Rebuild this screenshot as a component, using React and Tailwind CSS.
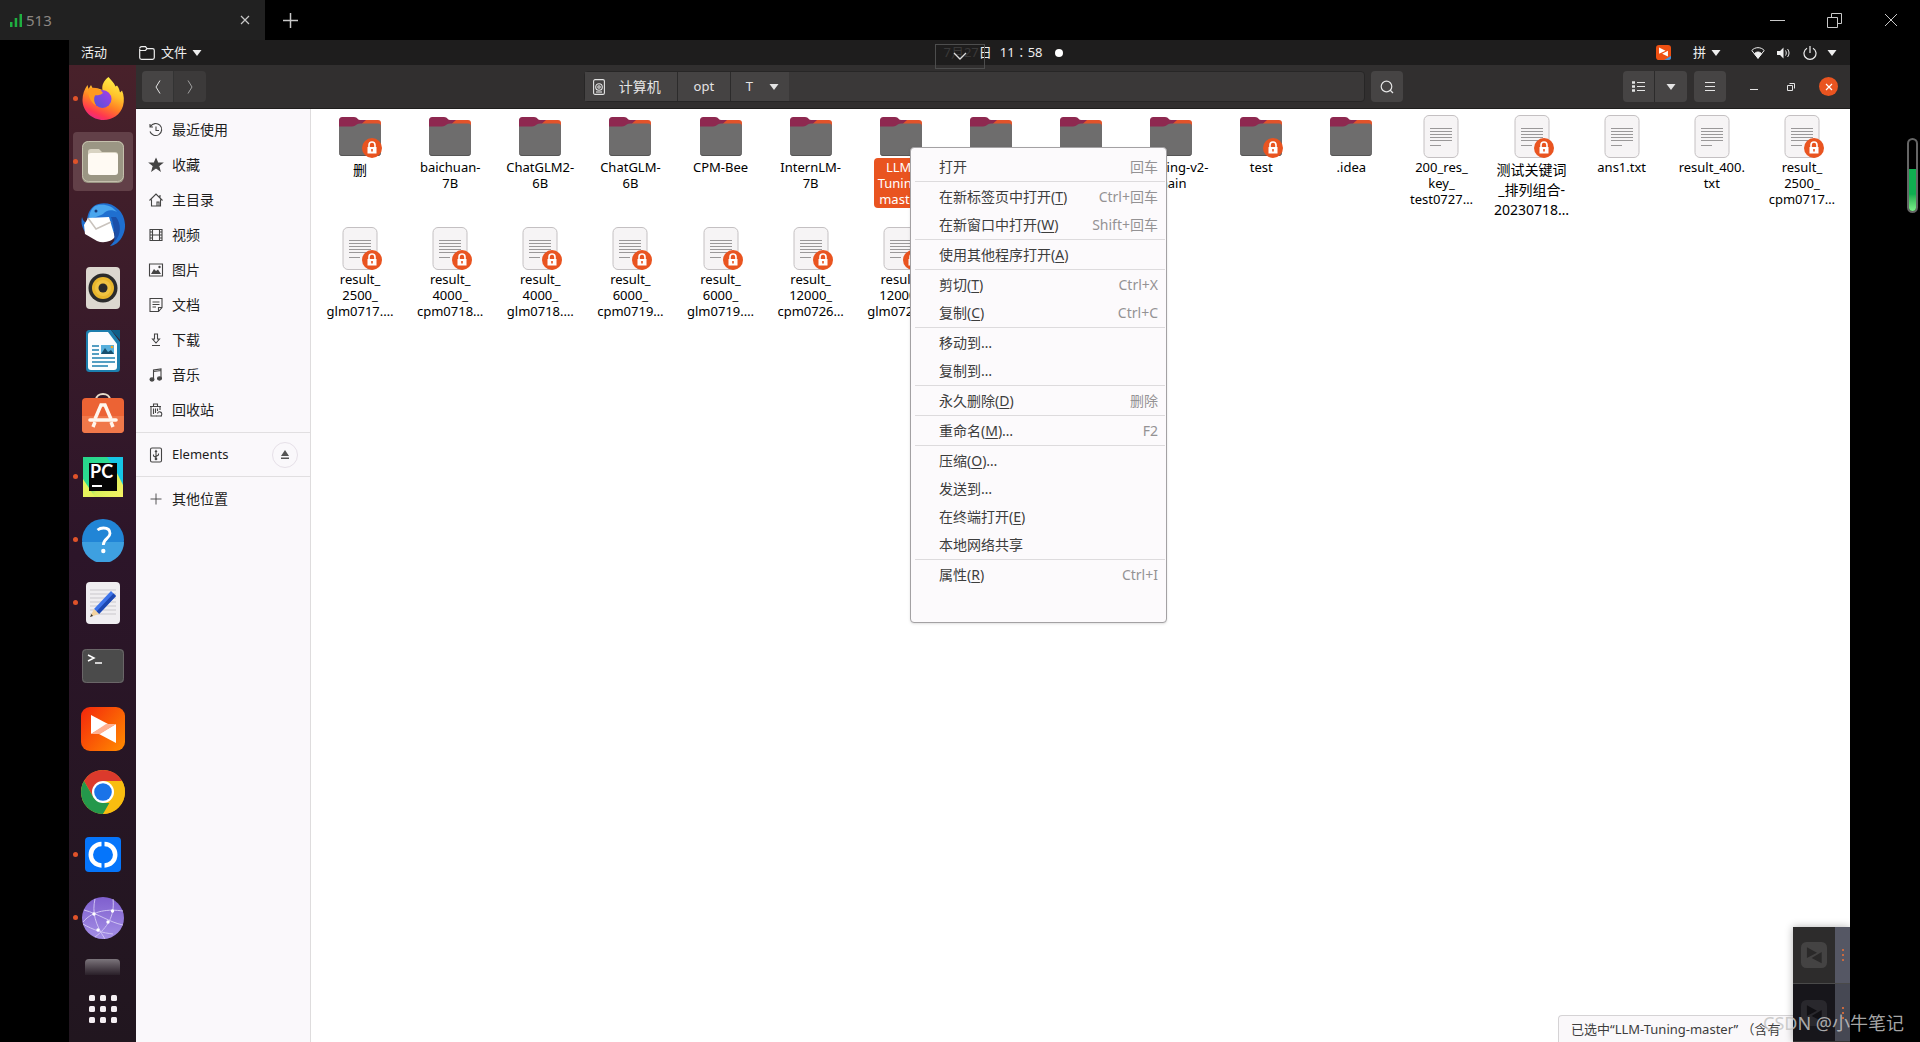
import React from 'react';
import clsx from 'clsx';

const places = [
    { label: '最近使用', icon: 'recent' },
    { label: '收藏', icon: 'star' },
    { label: '主目录', icon: 'home' },
    { label: '视频', icon: 'video' },
    { label: '图片', icon: 'image' },
    { label: '文档', icon: 'doc' },
    { label: '下载', icon: 'download' },
    { label: '音乐', icon: 'music' },
    { label: '回收站', icon: 'trash' },
];

const files = [
    { type: 'folder', locked: true, name: '删', cjk: true },
    { type: 'folder', name: 'baichuan-\n7B' },
    { type: 'folder', name: 'ChatGLM2-\n6B' },
    { type: 'folder', name: 'ChatGLM-\n6B' },
    { type: 'folder', name: 'CPM-Bee' },
    { type: 'folder', name: 'InternLM-\n7B' },
    { type: 'folder', name: 'LLM-\nTuning-\nmaster', selected: true },
    { type: 'folder', name: '' },
    { type: 'folder', name: '' },
    { type: 'folder', name: 'P-tuning-v2-\nmain' },
    { type: 'folder', locked: true, name: 'test' },
    { type: 'folder', name: '.idea' },
    { type: 'text', name: '200_res_\nkey_\ntest0727…' },
    { type: 'text', locked: true, name: '测试关键词\n_排列组合-\n20230718…', cjk: true },
    { type: 'text', name: 'ans1.txt' },
    { type: 'text', name: 'result_400.\ntxt' },
    { type: 'text', locked: true, name: 'result_\n2500_\ncpm0717…' },
    { type: 'text', locked: true, name: 'result_\n2500_\nglm0717.…' },
    { type: 'text', locked: true, name: 'result_\n4000_\ncpm0718…' },
    { type: 'text', locked: true, name: 'result_\n4000_\nglm0718.…' },
    { type: 'text', locked: true, name: 'result_\n6000_\ncpm0719…' },
    { type: 'text', locked: true, name: 'result_\n6000_\nglm0719.…' },
    { type: 'text', locked: true, name: 'result_\n12000_\ncpm0726…' },
    { type: 'text', locked: true, name: 'result_\n12000_\nglm0726.…' },
];

const menuGroups = [
    [{ label: '打开', accel: '回车' }],
    [
        { label: '在新标签页中打开', hotkey: 'T', accel: 'Ctrl+回车' },
        { label: '在新窗口中打开', hotkey: 'W', accel: 'Shift+回车' },
    ],
    [{ label: '使用其他程序打开', hotkey: 'A' }],
    [
        { label: '剪切', hotkey: 'T', accel: 'Ctrl+X' },
        { label: '复制', hotkey: 'C', accel: 'Ctrl+C' },
    ],
    [{ label: '移动到…' }, { label: '复制到…' }],
    [{ label: '永久删除', hotkey: 'D', accel: '删除' }],
    [{ label: '重命名', hotkey: 'M', more: true, accel: 'F2' }],
    [
        { label: '压缩', hotkey: 'O', more: true },
        { label: '发送到…' },
        { label: '在终端打开', hotkey: 'E' },
        { label: '本地网络共享' },
    ],
    [{ label: '属性', hotkey: 'R', accel: 'Ctrl+I' }],
];

const dockApps = [
    { name: 'Firefox', icon: 'firefox', running: true },
    { name: '文件', icon: 'files', running: true, active: true },
    { name: 'Thunderbird', icon: 'thunderbird' },
    { name: 'Rhythmbox', icon: 'rhythmbox' },
    { name: 'LibreOffice Writer', icon: 'writer' },
    { name: 'Ubuntu Software', icon: 'software' },
    { name: 'PyCharm', icon: 'pycharm', running: true },
    { name: '帮助', icon: 'help', running: true },
    { name: '文本编辑器', icon: 'editor', running: true },
    { name: '终端', icon: 'terminal' },
    { name: '向日葵', icon: 'remote' },
    { name: 'Chrome', icon: 'chrome' },
    { name: 'ToDesk', icon: 'todesk', running: true },
    { name: 'Web', icon: 'web', running: true },
];

const dockIcons = {
    firefox: (
        <>
            <defs>
                <linearGradient id="ffBody" x1="0.75" y1="0" x2="0.3" y2="1">
                    <stop offset="0" stopColor="#fff24a" />
                    <stop offset="0.35" stopColor="#ffc32c" />
                    <stop offset="0.6" stopColor="#ff8224" />
                    <stop offset="0.85" stopColor="#ff3750" />
                    <stop offset="1" stopColor="#e8268a" />
                </linearGradient>
                <linearGradient id="ffCore" x1="1" y1="0" x2="0" y2="1">
                    <stop offset="0" stopColor="#a93be8" />
                    <stop offset="1" stopColor="#4f55d8" />
                </linearGradient>
            </defs>
            <path d="M27.500 0C30 3 33 5.500 34.500 9.500L36 8.500C38 11 38.500 13 39 15.500L41 13.500C43 18 43.500 24 42 29C39.500 37.500 31.500 43 22.500 43C11 43 1.500 34 1.500 23C1.500 17 3.500 12 6.500 8L7.500 12L10 8L12 12C15 11 19 11.500 21.500 13C20.500 8 23 3.500 27.500 0Z" fill="url(#ffBody)" />
            <circle cx="21.5" cy="22" r="9" fill="url(#ffCore)" />
            <path d="M7 12C12 9.500 19 11 22 16C19 18.500 17 18 14 18.500C12.500 21 13 25.500 15 28.500C9 25 7 18 7 12Z" fill="#ff9a1f" />
        </>
    ),
    files: (
        <>
            <rect x="1" y="1" width="42" height="42" rx="6" fill="#9b9684" />
            <rect x="1.500" y="1.500" width="41" height="40" rx="6" fill="none" stroke="#c5c0ad" />
            <path d="M7 12C7 10 8 9 10 9H18L21 12H34C36 12 37 13 37 15V20H7Z" fill="#d9d3c2" />
            <rect x="7" y="13" width="30" height="22" rx="3" fill="#fffaf3" />
        </>
    ),
    thunderbird: (
        <>
            <path d="M13 3C19-1 30-1 37 6C44 12 46 24 42 32C39 39 33 43 29 43C34 38 36 34 35 29L8 33C3 29-1 22 1 14C2 18 4 19 6 20C6 12 8 7 13 3Z" fill="#1f6fd0" />
            <path d="M14 3C21 0 31 2 36 9C31 6 25 7 22 11C17 14 11 14 8 18C8 10 10 6 14 3Z" fill="#4aa6ee" />
            <path d="M3 22L7 15L28 14L34 34C31 38 23 41 16 38L4 31Z" fill="#fff" />
            <path d="M7 15L15 26L30 19" fill="none" stroke="#c9c3bd" strokeWidth="1.500" />
            <path d="M35 14C40 20 41 32 33 39C34 34 33 20 30 14Z" fill="#1b4fa8" />
            <circle cx="15" cy="8" r="1.500" fill="#173a7a" />
        </>
    ),
    rhythmbox: (
        <>
            <rect x="5" y="1" width="34" height="42" rx="4" fill="#dcd7cf" />
            <circle cx="22" cy="22" r="14.500" fill="#2b2b2b" />
            <circle cx="22" cy="22" r="11" fill="#e9b62c" />
            <circle cx="22" cy="22" r="8" fill="#f0c342" />
            <circle cx="22" cy="22" r="4.500" fill="#2b2b2b" />
        </>
    ),
    writer: (
        <>
            <path d="M9 1H30L39 13V39C39 42 38 43 36 43H9C6 43 5 42 5 39V5C5 2 6 1 9 1Z" fill="#1c7fae" />
            <path d="M30 1H39V11Z" fill="#0e5f88" />
            <path d="M10 3H27L36 15V38C36 40 35 41 33 41H10C8 41 7 40 7 38V6C7 4 8 3 10 3Z" fill="#fbfdfe" />
            <path d="M11 17H18M11 21H18M11 25H18M11 29H34M11 33H34M11 37H27" stroke="#1c7fae" strokeWidth="1.700" />
            <rect x="20" y="16" width="13" height="9" fill="#56b0dc" />
            <path d="M20 25L24 19L27 23L30 21L33 25Z" fill="#17506f" />
            <circle cx="31" cy="18" r="1.300" fill="#f5a623" />
        </>
    ),
    software: (
        <>
            <path d="M15 8C15 0 29 0 29 8" fill="none" stroke="#e8dccb" strokeWidth="2.200" />
            <rect x="1" y="6" width="42" height="35" rx="4" fill="#ec6334" />
            <path d="M1 24H43V37C43 40 41 41 39 41H5C2 41 1 40 1 37Z" fill="#f0784a" />
            <path d="M14 27L20 13H24L30 27M12 35L14 30M32 35L30 30" fill="none" stroke="#fff7ee" strokeWidth="3.400" />
            <path d="M9 28H35" stroke="#fff7ee" strokeWidth="3.600" strokeLinecap="round" />
        </>
    ),
    pycharm: (
        <>
            <defs>
                <linearGradient id="pyBg" x1="0" y1="0" x2="1" y2="1">
                    <stop offset="0" stopColor="#27d58a" />
                    <stop offset="0.45" stopColor="#2fdc93" />
                    <stop offset="0.6" stopColor="#d8f05a" />
                    <stop offset="1" stopColor="#f6f264" />
                </linearGradient>
            </defs>
            <rect x="2" y="2" width="40" height="40" fill="url(#pyBg)" />
            <path d="M26 2H42V30L34 14Z" fill="#16c6e6" />
            <path d="M2 24L14 42H2Z" fill="#e6f25c" />
            <rect x="8" y="8" width="28" height="28" fill="#050505" />
            <text x="9" y="23" fontSize="18" fontWeight="700" fill="#fff" className="font-['Lato',sans-serif]">PC</text>
            <rect x="11" y="30" width="10" height="2" fill="#fff" />
        </>
    ),
    help: (
        <>
            <circle cx="22" cy="22" r="21" fill="#2185d6" />
            <path d="M1 24H43A21 21 0 0 1 1 24Z" fill="#3ea0e0" />
            <path d="M16.500 12C18 10.800 20 10 22.500 10C26.500 10 29 12 29 15.500C29 20.500 22.300 20.500 22.300 27" fill="none" stroke="#fff" strokeWidth="2.800" />
            <circle cx="22.3" cy="33" r="2.200" fill="#fff" />
        </>
    ),
    editor: (
        <>
            <rect x="5" y="1" width="34" height="42" rx="4" fill="#f0eef1" />
            <path d="M9 9H35M9 13H35M9 17H35M9 21H35M9 25H35M9 29H35M9 33H35" stroke="#c9c7cc" />
            <path d="M13 28L30 10L35 15L18 33Z" fill="#3f74ea" />
            <path d="M15.500 30.500L32.500 12.500L35 15L18 33Z" fill="#1d47b0" />
            <path d="M13 28L9 36L18 33Z" fill="#f3d3a0" />
            <path d="M10.500 33L9 36L12 35Z" fill="#333" />
        </>
    ),
    terminal: (
        <>
            <rect x="1" y="5" width="42" height="34" rx="4" fill="#4b4b4b" />
            <rect x="1.500" y="5.500" width="41" height="33" rx="4" fill="none" stroke="#6a6668" />
            <path d="M7 11L13 14L7 17" fill="none" stroke="#fff" strokeWidth="1.500" />
            <path d="M14 19H21" stroke="#fff" strokeWidth="1.500" />
        </>
    ),
    remote: (
        <>
            <defs>
                <linearGradient id="sunBg" x1="0" y1="0" x2="1" y2="0.8">
                    <stop offset="0" stopColor="#f3260c" />
                    <stop offset="1" stopColor="#ff8400" />
                </linearGradient>
            </defs>
            <rect width="44" height="44" rx="9" fill="url(#sunBg)" />
            <path d="M10 8L27 17L10 27Z" fill="#fff" />
            <path d="M35 17V36L18 27Z" fill="#fff" />
            <path d="M10 27L25 17H35L19 27Z" fill="#ffb091" />
        </>
    ),
    chrome: (
        <>
            <circle cx="22" cy="22" r="22" fill="#f9bd10" />
            <path d="M22 0A22 22 0 0 1 41 11H22L12.500 27.500L3 11A22 22 0 0 1 22 0Z" fill="#dc3a2c" />
            <path d="M3 11L12.500 27.500L22 33H31.500L22 44A22 22 0 0 1 3 11Z" fill="#24984b" />
            <path d="M31.500 27.500L22 44A22 22 0 0 0 41 11H22Z" fill="#f9bd10" />
            <circle cx="22" cy="22" r="11" fill="#fff" />
            <circle cx="22" cy="22" r="8.800" fill="#1a73e8" />
        </>
    ),
    todesk: (
        <>
            <rect x="4" y="4" width="36" height="35" rx="4" fill="#0575fb" />
            <path d="M20.500 11A10.700 10.700 0 0 0 20.500 32.400M23.500 11A10.700 10.700 0 0 1 23.500 32.400" fill="none" stroke="#fff" strokeWidth="4.500" />
        </>
    ),
    web: (
        <>
            <defs>
                <linearGradient id="webBg" x1="0" y1="0" x2="0" y2="1">
                    <stop offset="0" stopColor="#7f5fce" />
                    <stop offset="1" stopColor="#a48fe6" />
                </linearGradient>
            </defs>
            <circle cx="22" cy="22" r="21" fill="url(#webBg)" />
            <path d="M14 3C11 16 14 28 24 43M32 3C34 20 26 32 14 41M2 26C12 14 28 13 42 15M3 14C18 18 28 26 42 29M2 28C12 34 22 37 32 38" fill="none" stroke="#cfc3f3" />
            <circle cx="13" cy="18" r="1.700" fill="#fff" />
            <circle cx="31.500" cy="15" r="1.700" fill="#fff" />
            <circle cx="27" cy="26" r="1.700" fill="#fff" />
            <circle cx="17" cy="34" r="1.700" fill="#fff" />
        </>
    ),
};

const placeIcons = {
    recent: <path d="M2.500 4.500A6 6 0 1 1 2 9.500M2 2V5H5M8 4.500V8.500H11" />,
    star: <path d="M8 1.800L9.800 6H14.300L10.700 8.900L12 13.600L8 10.900L4 13.600L5.300 8.900L1.700 6H6.200Z" fill="#444" />,
    home: <path d="M1.500 8.500L8 2L14.500 8.500M3.500 7.500V14H12.500V7.500M9 14V10H11V14M12 3V6" />,
    video: <path d="M2 2.500H14V13.500H2ZM4.500 2.500V13.500M11.500 2.500V13.500M4.500 8H11.500M2 5H4.500M2 8H4.500M2 11H4.500M11.500 5H14M11.500 8H14M11.500 11H14" />,
    image: (
        <>
            <path d="M1.500 2H14.500V14H1.500Z" />
            <path d="M3 12L6 7L8 9L10 7.500L13 12Z" fill="#444" stroke="none" />
            <circle cx="11.500" cy="5" r="1.200" fill="#444" stroke="none" />
        </>
    ),
    doc: <path d="M2 1.500H14V10.500L10.500 14.500H2ZM14 10.500H10.500V14.500M4.500 5H11.500M4.500 7.500H11.500M4.500 10H8" />,
    download: <path d="M6.500 2H9.500V7H11.500L8 11L4.500 7H6.500ZM4 13.500H12" />,
    music: (
        <>
            <path d="M5.500 12V3L13 2V11M5.500 4.500L13 3.500" />
            <ellipse cx="4" cy="12.500" rx="2" ry="1.600" fill="#444" />
            <ellipse cx="11.500" cy="11.500" rx="2" ry="1.600" fill="#444" />
        </>
    ),
    trash: (
        <>
            <path d="M2 4.500H13M5.500 4V2H9.500V4M3 5V14H9M5.500 6.500V12M7.500 6.500V11M9.500 6.500V9M12 5V8" />
            <path d="M9.500 11.500A2.200 2.200 0 1 1 12 14.200M8.500 14H14" />
        </>
    ),
    usb: (
        <>
            <rect x="2.500" y="1" width="11" height="14" rx="1.500" />
            <path d="M8 4V12M8 10.500L5.500 9V7.500M8 9.500L10.500 8V6.500M7 5L8 3.500L9 5" />
            <circle cx="8" cy="12" r="0.800" fill="#444" />
        </>
    ),
    plus: <path d="M8 2.500V13.500M2.500 8H13.500" strokeWidth="0.900" />,
};

const Triangle = ({ className }) => (
    <svg viewBox="0 0 10 6" className={clsx('h-[6px] w-[10px]', className)} fill="currentColor">
        <path d="M0.500 0H9.500L5 6Z" />
    </svg>
);

const LockBadge = () => (
    <svg viewBox="0 0 20 20" className="absolute right-0 bottom-0 size-5">
        <circle cx="10" cy="10" r="10" fill="#e95420" />
        <rect x="5.500" y="9" width="9" height="6.500" fill="#fff" />
        <path d="M7 9.500V7A3 3 0 0 1 13 7V9.500" fill="none" stroke="#fff" strokeWidth="1.600" />
        <rect x="9.200" y="11" width="1.600" height="2.500" fill="#e95420" />
    </svg>
);

const FolderIcon = () => (
    <svg viewBox="0 0 44 43" className="h-[43px] w-11">
        <path d="M16 5H40C42 5 43 6 43 8V20H5Z" fill="#e2532a" />
        <path d="M5 2H16C20 2 19 5 22 5H28L18 14H1V6C1 3 2 2 5 2Z" fill="#8e2850" />
        <path d="M1 11.500H14C18 11.500 18 8.500 22 8.500H40C42 8.500 43 9.500 43 11.500V37C43 39.500 42 41 39.500 41H4.500C2 41 1 39.500 1 37Z" fill="#6e6d6d" />
        <path d="M1 36V37C1 39.500 2 41 4.500 41H39.500C42 41 43 39.500 43 37V36C43 38.500 42 40 39.500 40H4.500C2 40 1 38.500 1 36Z" fill="#555" />
    </svg>
);

const TextIcon = () => (
    <svg viewBox="0 0 44 43" className="h-[43px] w-11">
        <rect x="5" y="0.500" width="34" height="42" rx="5" fill="#f6f4f5" stroke="#c4c0c2" />
        <path d="M11 13.500H33M11 16.500H33M11 19.500H33M11 22.500H33M11 25.500H33M11 30.500H22" stroke="#9a9899" />
    </svg>
);

const FileItem = ({ file }) => (
    <li className="flex h-28 flex-col items-center">
        <div className="relative h-[43px] w-11">
            {file.type === 'folder' ? <FolderIcon /> : <TextIcon />}
            {file.locked && <LockBadge />}
        </div>
        {file.name && (
            <span
                className={clsx(
                    'rounded-sm px-1 py-px text-center whitespace-pre',
                    file.cjk ? 'mt-px text-sm leading-5' : 'text-[13px] leading-4',
                    file.selected ? 'bg-[#e95420] text-white' : 'text-black'
                )}
            >
                {file.name}
            </span>
        )}
    </li>
);

const PlaceItem = ({ icon, label, children }) => (
    <li className="flex h-[35px] items-center pr-3 pl-3">
        <a href="#" className="flex flex-1 items-center gap-2 text-sm text-[#1d1d1d]">
            <svg viewBox="0 0 16 16" className="size-4" fill="none" stroke="#444" strokeWidth="1.100">
                {placeIcons[icon]}
            </svg>
            {label}
        </a>
        {children}
    </li>
);

const TabBar = () => (
    <header className="flex h-10 items-center text-[#c8c8c8]">
        <div className="flex h-full w-[265px] items-center bg-[#212121] pr-3 pl-[10px]">
            <svg viewBox="0 0 12 13" className="h-[13px] w-3" fill="#1fb040">
                <path d="M0 8H2.500V13H0ZM4.700 4H7.200V13H4.700ZM9.500 0H12V13H9.500Z" />
            </svg>
            <span className="ml-1 flex-1 text-[15px] text-[#8b8681]">513</span>
            <button aria-label="关闭标签页" className="flex size-4 items-center justify-center">
                <svg viewBox="0 0 10 10" className="size-[10px]" stroke="currentColor" strokeWidth="1.200"><path d="M1 1L9 9M9 1L1 9" /></svg>
            </button>
        </div>
        <button aria-label="新建标签页" className="ml-[18px]">
            <svg viewBox="0 0 15 15" className="size-[15px]" stroke="currentColor" strokeWidth="1.500"><path d="M7.500 0V15M0 7.500H15" /></svg>
        </button>
        <div className="ml-auto flex gap-[42px] pr-[22px]">
            <button aria-label="最小化">
                <svg viewBox="0 0 15 15" className="size-[15px]" stroke="currentColor"><path d="M0 7.500H15" /></svg>
            </button>
            <button aria-label="还原">
                <svg viewBox="0 0 15 15" className="size-[15px]" fill="none" stroke="currentColor"><path d="M0.500 4.500H10.500V14.500H0.500ZM4.500 4.500V0.500H14.500V10.500H10.500" /></svg>
            </button>
            <button aria-label="关闭">
                <svg viewBox="0 0 14 14" className="size-[14px]" stroke="currentColor"><path d="M1 1L13 13M13 1L1 13" /></svg>
            </button>
        </div>
    </header>
);

const TopPanel = () => (
    <div className="flex h-[25px] items-center bg-[#1e1d1d] text-[13px] text-[#eeeeee]">
        <div className="flex flex-1 items-center">
            <span className="ml-3">活动</span>
            <svg viewBox="0 0 16 14" className="ml-8 h-[14px] w-4" fill="none" stroke="currentColor" strokeWidth="1.200">
                <path d="M0.700 3V11.500C0.700 12.500 1.500 13.300 2.500 13.300H13.500C14.500 13.300 15.300 12.500 15.300 11.500V4.500C15.300 3.500 14.500 2.700 13.500 2.700H8L6.500 0.700H2.500C1.500 0.700 0.700 1.500 0.700 2.500M1 4.500H6.500L8 2.700" />
            </svg>
            <span className="ml-[6px]">文件</span>
            <Triangle className="ml-[5px]" />
        </div>
        <div className="relative ml-23 flex items-center gap-2 pl-2">
            {/* The pull-down tab hides the first part of the date */}
            <span><span className="text-[#3a3939]">7月27</span>日</span>
            <span>11∶58</span>
            <span className="ml-1 size-2 rounded-full bg-white" />
            <button
                aria-label="展开工具栏"
                className="absolute top-[1px] left-0 z-10 flex h-[25px] w-[50px] items-center justify-center border border-[#4d4d4d]"
            >
                <svg viewBox="0 0 14 8" className="h-2 w-[14px]" fill="none" stroke="#ddd" strokeWidth="1.300"><path d="M1 1L7 7L13 1" /></svg>
            </button>
        </div>
        <div className="flex flex-1 items-center justify-end pr-[13px]">
            <svg viewBox="0 0 44 44" className="size-[15px]">
                <rect width="44" height="44" rx="9" fill="#ee5012" />
                <path d="M9 7L28 17L9 26ZM35 17V34L18 26Z" fill="#fff" />
                <path d="M24 44L44 32V36C44 42 42 44 36 44Z" fill="#3f92df" />
            </svg>
            <span className="ml-[22px]">拼</span>
            <Triangle className="ml-[5px]" />
            <svg viewBox="0 0 14 12" className="ml-[30px] h-3 w-[14px]" fill="none" stroke="currentColor">
                <path d="M0.800 3.500C4-0.300 10-0.300 13.200 3.500L7 11.300Z" />
                <path d="M3.500 6.500C5.500 4.500 8.500 4.500 10.500 6.500L7 11.300Z" fill="currentColor" />
            </svg>
            <svg viewBox="0 0 14 12" className="ml-3 h-3 w-[14px]" fill="none" stroke="currentColor">
                <path d="M0 4H3L6.500 0.500V11.500L3 8H0Z" fill="currentColor" stroke="none" />
                <path d="M8.500 3.500C9.500 5 9.500 7 8.500 8.500M10.500 2C12.500 4.500 12.500 7.500 10.500 10" />
            </svg>
            <svg viewBox="0 0 14 14" className="ml-3 size-[14px]" fill="none" stroke="currentColor" strokeWidth="1.200">
                <path d="M4 2.200A6 6 0 1 0 10 2.200M7 0V7" />
            </svg>
            <Triangle className="ml-[10px]" />
        </div>
    </div>
);

const HeaderBar = () => (
    <div className="flex h-[44px] items-center border-b border-[#1f1e1d] bg-[#312f2f] px-[6px] text-[#e4e4e4]">
        <div className="flex h-[31px]">
            <button aria-label="后退" className="flex w-8 items-center justify-center rounded-l border-r border-[#333] bg-[#464444]">
                <svg viewBox="0 0 8 14" className="h-[14px] w-2" fill="none" stroke="currentColor"><path d="M6 0.500L2 7L6 13.500" /></svg>
            </button>
            <button aria-label="前进" className="flex w-8 items-center justify-center rounded-r bg-[#3c3a3a] text-[#a0a0a0]">
                <svg viewBox="0 0 8 14" className="h-[14px] w-2" fill="none" stroke="currentColor"><path d="M2 0.500L6 7L2 13.500" /></svg>
            </button>
        </div>
        <div className="flex-[12]" />
        <div className="flex flex-[26] gap-[6px]">
            <div className="flex h-[31px] flex-1 rounded border border-[#272626] bg-[#3a3838] text-sm">
                <button className="flex w-[93px] items-center gap-[14px] border-r border-[#2c2b2b] bg-[#454343] pl-2">
                    <svg viewBox="0 0 12 16" className="h-4 w-3" fill="none" stroke="currentColor" strokeWidth="1.100">
                        <rect x="0.600" y="0.600" width="10.800" height="14.800" rx="1.500" />
                        <circle cx="6" cy="8" r="3.300" />
                        <circle cx="6" cy="8" r="1.200" />
                        <path d="M3 13H9" />
                    </svg>
                    计算机
                </button>
                <button className="w-[53px] border-r border-[#2c2b2b] bg-[#454343] text-[13px]">opt</button>
                <button className="flex w-[58px] items-center gap-4 bg-[#454343] pl-[15px] text-[13px]">
                    T
                    <Triangle className="h-[5px] w-2" />
                </button>
            </div>
            <button aria-label="搜索" className="flex h-[31px] w-8 items-center justify-center rounded bg-[#464444]">
                <svg viewBox="0 0 14 14" className="size-[14px]" fill="none" stroke="currentColor" strokeWidth="1.200"><circle cx="6.500" cy="6.500" r="5.300" /><path d="M10 10L13 13" /></svg>
            </button>
        </div>
        <div className="flex-[7]" />
        <div className="flex h-[31px]">
            <button aria-label="列表视图" className="flex w-8 items-center justify-center rounded-l border-r border-[#2c2b2b] bg-[#464444]">
                <svg viewBox="0 0 13 11" className="h-[11px] w-[13px]" stroke="currentColor" fill="none"><path d="M0 1.500H3M0 5.500H3M0 9.500H3" strokeWidth="2.600" /><path d="M5 1.500H13M5 5.500H13M5 9.500H13" /></svg>
            </button>
            <button aria-label="视图选项" className="flex w-8 items-center justify-center rounded-r bg-[#464444]"><Triangle className="h-[5px] w-2" /></button>
        </div>
        <button aria-label="菜单" className="ml-[7px] flex h-[31px] w-8 items-center justify-center rounded bg-[#464444]">
            <svg viewBox="0 0 10 10" className="size-[10px]" stroke="currentColor"><path d="M0 0.500H10M0 4.500H10M0 8.500H10" /></svg>
        </button>
        <button aria-label="最小化窗口" className="ml-6">
            <svg viewBox="0 0 8 8" className="size-2" stroke="currentColor"><path d="M0 6.500H8" /></svg>
        </button>
        <button aria-label="还原窗口" className="ml-[29px]">
            <svg viewBox="0 0 8 8" className="size-2" fill="none" stroke="currentColor"><path d="M0.500 2.500H5.500V7.500H0.500ZM2.500 0.500H7.500V5.500" /></svg>
        </button>
        <button aria-label="关闭窗口" className="mr-[6px] ml-6 flex size-[19px] items-center justify-center rounded-full bg-[#e95420]">
            <svg viewBox="0 0 8 8" className="size-2" stroke="#fff" strokeWidth="1.200"><path d="M1 1L7 7M7 1L1 7" /></svg>
        </button>
    </div>
);

const Dock = () => (
    <nav className="flex w-[67px] shrink-0 flex-col gap-1 bg-linear-to-b from-[#48212a] via-[#2c1529] to-[#21161f] px-1 pt-1">
        {dockApps.map((app) => (
            <button
                key={app.name}
                aria-label={app.name}
                className={clsx('relative flex h-[59px] w-[60px] items-center justify-center rounded-sm', app.active && 'bg-[#624048]')}
            >
                {app.running && <span className="absolute left-0 size-[5px] rounded-full bg-[#e0532a]" />}
                <svg viewBox="0 0 44 44" className="size-11">
                    {dockIcons[app.icon]}
                </svg>
            </button>
        ))}
        <div className="mt-2 ml-3 h-4 w-[35px] rounded-t bg-linear-to-b from-[#7c757c] to-[#2a2029]" />
        <button aria-label="显示应用程序" className="mt-4 ml-4">
            <svg viewBox="0 0 28 28" className="size-7" fill="#f4eef2">
                {[0, 11, 22].map((y) => [0, 11, 22].map((x) => <rect key={`${x}-${y}`} x={x} y={y} width="6" height="6" rx="1.500" />))}
            </svg>
        </button>
    </nav>
);

const Sidebar = () => (
    <aside className="w-[175px] shrink-0 border-r border-[#dedcdd] bg-[#faf8fb] pt-[3px]">
        <ul>
            {places.map((p) => (
                <PlaceItem key={p.icon} icon={p.icon} label={p.label} />
            ))}
        </ul>
        <ul className="mt-[5px] border-t border-[#e1dfe1] pt-1">
            <PlaceItem icon="usb" label={<span className="text-[13px]">Elements</span>}>
                <button aria-label="弹出" className="flex size-[26px] items-center justify-center rounded-full border border-[#e6e0e8]">
                    <svg viewBox="0 0 8 9" className="h-[9px] w-2" fill="#555"><path d="M4 0L8 6H0ZM0 7.500H8V9H0Z" /></svg>
                </button>
            </PlaceItem>
        </ul>
        <ul className="mt-1 border-t border-[#e1dfe1] pt-1">
            <PlaceItem icon="plus" label="其他位置" />
        </ul>
    </aside>
);

const ContextMenu = () => (
    <div role="menu" className="absolute top-[38px] left-[599px] w-[257px] rounded border border-[#a3a1a3] bg-[#fcfafc] pt-[5px] pr-px pb-[33px] pl-1 shadow-sm">
        {menuGroups.map((group, i) => (
            <div key={i} className={clsx(i > 0 && 'border-t border-[#dddbdd] pt-px')}>
                {group.map((item) => (
                    <button key={item.label} role="menuitem" className="flex h-7 w-full items-center justify-between pr-[7px] pl-6 text-sm text-[#3d3d3d]">
                        <span>
                            {item.label}
                            {item.hotkey && <>(<u className="underline-offset-2">{item.hotkey}</u>)</>}
                            {item.more && '…'}
                        </span>
                        <span className="text-[#949294]">{item.accel}</span>
                    </button>
                ))}
            </div>
        ))}
    </div>
);

const VideoTile = ({ dark }) => (
    <div className={clsx('flex h-[57px]', dark ? 'bg-[#17161b]' : 'border-b border-[#4a4a4a] bg-[#2d2c2c]')}>
        <div className="flex w-[42px] items-center justify-center">
            <svg viewBox="0 0 44 44" className="size-[26px]">
                <rect width="44" height="44" rx="9" fill={dark ? '#29282d' : '#444343'} />
                <path d="M10 9L27 18L10 27ZM35 17V36L18 27Z" fill={dark ? '#111014' : '#2a2929'} />
            </svg>
        </div>
        <div className={clsx('flex flex-1 items-center justify-center', dark ? 'bg-[#464853]' : 'bg-[#555764]')}>
            <svg viewBox="0 0 2 12" className="h-3 w-[2px]" fill="#c9693f"><path d="M0 0H2V2H0ZM0 5H2V7H0ZM0 10H2V12H0Z" /></svg>
        </div>
    </div>
);

const App = () => {
    return (
        <div className="relative flex min-h-screen flex-col overflow-hidden bg-black font-['Noto_Sans','Noto_Sans_CJK_SC',sans-serif]">
            <TabBar />
            <div className="mr-[70px] ml-[69px] flex flex-1 flex-col">
                <TopPanel />
                <div className="flex flex-1">
                    <Dock />
                    <div className="flex min-w-0 flex-1 flex-col">
                        <HeaderBar />
                        <div className="flex flex-1">
                            <Sidebar />
                            <main className="relative flex-1 bg-white">
                                <ul className="grid grid-cols-[repeat(auto-fill,minmax(90px,1fr))] pt-[6px] pr-[3px] pl-1">
                                    {files.map((file, i) => (
                                        <FileItem key={i} file={file} />
                                    ))}
                                </ul>
                                <ContextMenu />
                                {/* Selection status */}
                                <div className="absolute right-0 bottom-0 h-[27px] w-[292px] overflow-hidden rounded-tl border-t border-l border-[#d5d3d5] bg-[#faf8fa] pt-[3px] pl-3 text-[13px] leading-5 whitespace-nowrap text-[#3d3d3d]">
                                    已选中“LLM-Tuning-master” （含有
                                </div>
                                {/* Meeting thumbnails */}
                                <div className="absolute right-0 bottom-0 w-[57px] border-b border-[#333] shadow-[0_0_8px_rgba(0,0,0,0.3)]">
                                    <VideoTile />
                                    <VideoTile dark />
                                </div>
                            </main>
                        </div>
                    </div>
                </div>
            </div>
            {/* Volume level */}
            <div className="absolute top-[138px] right-[2px] flex h-[75px] w-[11px] flex-col justify-end overflow-hidden rounded-full border-2 border-[#666] bg-black">
                <div className="h-[42px] bg-linear-to-b from-[#0fae50] from-60% to-[#7cf08a]" />
            </div>
            <span className="absolute right-4 bottom-[7px] text-lg leading-6 text-[#c4c4c4]/85">CSDN @小牛笔记</span>
        </div>
    );
};

export default App;
